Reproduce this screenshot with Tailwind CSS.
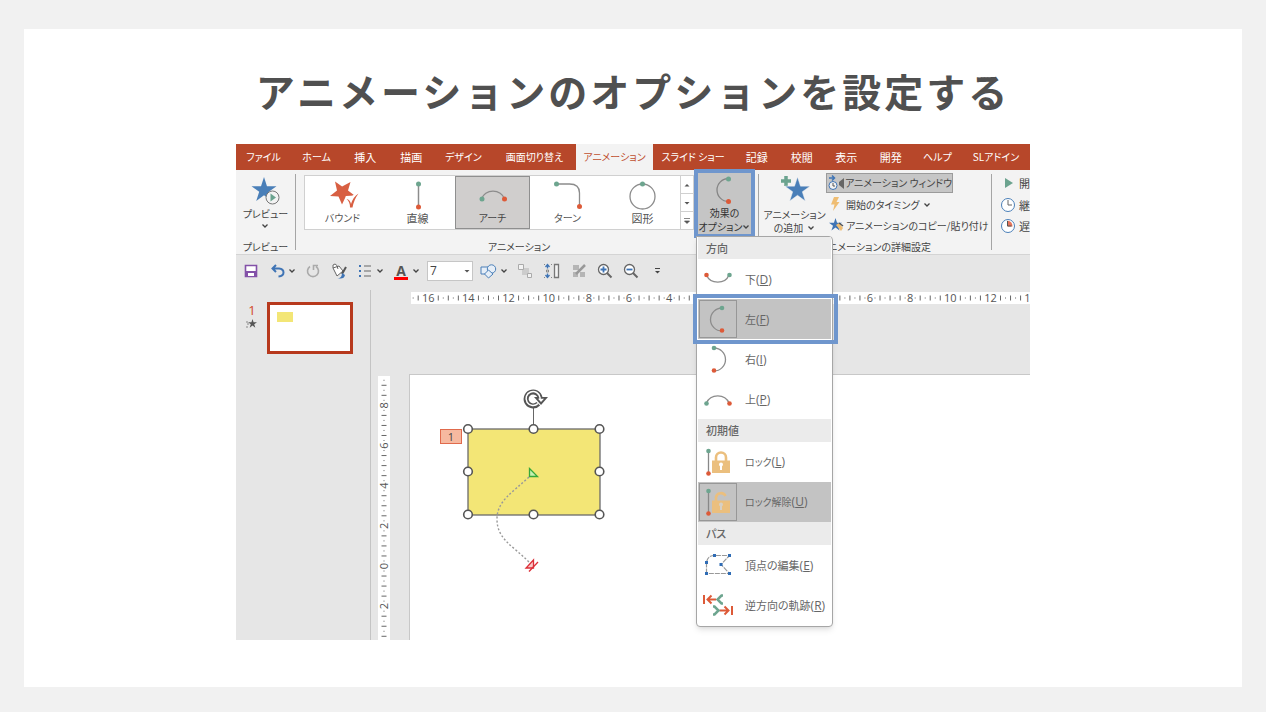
<!DOCTYPE html>
<html lang="ja">
<head>
<meta charset="utf-8">
<meta name="viewport" content="width=device-width, initial-scale=1">
<title>アニメーションのオプションを設定する</title>
<script src="https://cdn.jsdelivr.net/npm/@tailwindcss/browser@4"></script>
</head>
<body class="bg-[#f1f1f1] font-['Noto_Sans_CJK_JP',sans-serif] text-[#444]">
<svg class="hidden" aria-hidden="true">
  <symbol id="chev" viewBox="0 0 8 8"><path d="M1.500 2.500 4 5l2.500-2.500" fill="none" stroke="#444" stroke-width="1.300"/></symbol>
  <symbol id="star" viewBox="0 0 26 26"><path d="M13 0l3.100 9.500H26l-8 5.900 3.100 9.600-8.100-6-8.100 6L8 15.400 0 9.500h9.900z"/></symbol>
</svg>
<main class="min-h-screen px-6 pt-[29px] pb-[25px]">
<article class="min-h-[658px] bg-white pt-[31px] pb-[47px]">
<h1 class="text-center text-[39px] leading-[60px] font-bold tracking-[3px] text-[#505050]">アニメーションのオプションを設定する</h1>

<div class="relative mx-auto mt-[24px] max-w-[794px] bg-[#e6e6e6] text-[11px] leading-4 whitespace-nowrap [font-feature-settings:'palt']">
  <!-- ribbon tabs -->
  <nav class="grid h-[26px] grid-cols-[55fr_51fr_46fr_46fr_58fr_84fr_76fr_81fr_46fr_44fr_45fr_44fr_49fr_68fr] bg-[#b7472a] text-white">
    <button class="text-[10px]">ファイル</button><button class="text-[10px]">ホーム</button><button>挿入</button><button>描画</button><button class="text-[10px]">デザイン</button><button class="text-[10px]">画面切り替え</button><button class="bg-[#f3f3f3] text-[10px] text-[#c0502f]">アニメーション</button><button class="text-[10px]">スライド ショー</button><button>記録</button><button>校閲</button><button>表示</button><button>開発</button><button class="text-[10px]">ヘルプ</button><button class="text-[10px]">SLアドイン</button>
  </nav>

  <!-- ribbon -->
  <div class="flex h-[85px] overflow-hidden border-b border-[#d4d4d4] bg-[#f3f3f3] pt-[3px] text-[10px]">
    <section class="flex w-[59px] shrink-0 flex-col items-center">
      <button class="flex h-[67px] flex-col items-center">
        <svg class="mt-[3px] h-[30px] w-[30px]" viewBox="251 176 30 30"><use href="#star" x="252" y="177" width="26" height="25" fill="#4a7fb8"/><circle cx="273.500" cy="197.500" r="6.500" fill="#f3f3f3" stroke="#777"/><path d="M271.500 193.500l5.500 4-5.500 4z" fill="#6ba38f"/></svg>
        <span>プレビュー</span><svg class="h-2 w-2"><use href="#chev"/></svg>
      </button>
      <h2 class="leading-[14px]">プレビュー</h2>
    </section>
    <div class="mt-px h-[76px] w-px shrink-0 bg-[#a5a5a5]"></div>
    <section class="flex w-[462px] shrink-0 flex-col pt-[2px] pl-2">
      <div class="flex h-[55px] w-[390px] shrink-0 border border-[#d0d0d0] bg-white text-[#555]">
        <button class="flex w-[75px] flex-col items-center pt-[2px]"><svg class="h-8 w-[74px]" viewBox="305 178 74 32"><path d="M334 181.500l7.100 5 8.400-4.500-2.500 8.500 6.500 5-8.500.500-4 8.500-3.500-8-8.500-.500 7-5.500z" fill="#d85f42"/><path d="M344.500 196.500l4.500 1 7-5 2 2-8 14-3-5z" fill="#fff"/><path d="M345.500 199q3.500.5 4.500 5 2-7 7.500-10.500-4.500 6-6 14h-2.500q0-6-3.500-8.500z" fill="#d85f42"/></svg>バウンド</button>
        <button class="flex w-[75px] flex-col items-center pt-[2px] text-[11px]"><svg class="h-8 w-[74px]" viewBox="380 178 74 32"><path d="M417.500 184v23" stroke="#8c8c8c" stroke-width="1.500"/><circle cx="417.500" cy="184" r="2.500" fill="#6da58f"/><circle cx="417.500" cy="207" r="2.500" fill="#dd5a38"/></svg>直線</button>
        <button class="flex w-[75px] flex-col items-center border border-[#8f8f8f] bg-[#d0cecd] pt-px text-[#444]"><svg class="h-8 w-[72px]" viewBox="456 178 72 32"><path d="M480.500 199a12 11 0 0 1 23 0" fill="none" stroke="#8c8c8c" stroke-width="1.300"/><circle cx="481" cy="199" r="2.500" fill="#6da58f"/><circle cx="503.500" cy="199" r="2.500" fill="#dd5a38"/></svg>アーチ</button>
        <button class="flex w-[75px] flex-col items-center pt-[2px]"><svg class="h-8 w-[74px]" viewBox="530 178 74 32"><path d="M555.500 184h13q10 0 10 9v13" fill="none" stroke="#8c8c8c" stroke-width="1.300"/><circle cx="555.500" cy="184" r="2.500" fill="#6da58f"/><circle cx="578.500" cy="206.500" r="2.500" fill="#dd5a38"/></svg>ターン</button>
        <button class="flex w-[75px] flex-col items-center pt-[2px] text-[11px]"><svg class="h-8 w-[74px]" viewBox="605 178 74 32"><circle cx="641.500" cy="196.500" r="12.500" fill="none" stroke="#8c8c8c" stroke-width="1.300"/><circle cx="641.500" cy="184" r="2.500" fill="#6da58f"/></svg>図形</button>
        <div class="flex w-[13px] flex-col divide-y divide-[#d0d0d0] border-l border-[#d0d0d0]">
          <button class="flex flex-1 items-center justify-center" aria-label="前の行"><svg class="size-2" viewBox="0 0 8 8"><path d="M1.500 5.500h5L4 3z" fill="#555"/></svg></button>
          <button class="flex flex-1 items-center justify-center" aria-label="次の行"><svg class="size-2" viewBox="0 0 8 8"><path d="M1.500 3h5L4 5.500z" fill="#555"/></svg></button>
          <button class="flex flex-1 items-center justify-center" aria-label="その他"><svg class="size-2" viewBox="0 0 8 8"><path d="M1 1.500h6M1.500 4h5L4 6.500z" fill="#555" stroke="#555" stroke-width=".7"/></svg></button>
        </div>
      </div>
      <h2 class="mt-[10px] w-[430px] text-center leading-[14px]">アニメーション</h2>
    </section>
    <div class="mt-px h-[76px] w-px shrink-0 bg-[#a5a5a5]"></div>
    <section class="w-[232px] shrink-0">
      <div class="ml-1 flex h-[67px]">
        <button class="flex w-[63px] flex-col items-center leading-[13px]"><svg class="mt-px mb-[3px] h-[31px] w-[32px]" viewBox="779 175 32 31"><path d="M786 177v10M781 182h10" stroke="#6ba38f" stroke-width="3.500"/><use href="#star" x="785" y="178" width="25" height="25" fill="#4a7fb8" stroke="#f3f3f3" stroke-width=".5"/></svg><span>アニメーション</span><span class="flex items-center gap-1">の追加<svg class="h-2 w-2"><use href="#chev"/></svg></span></button>
        <div class="flex flex-col items-start">
          <button class="flex h-[20px] items-center border border-[#9b9b9b] bg-[#c6c6c6]"><svg class="h-[18px] w-[18px] shrink-0" viewBox="826 174 18 18"><path d="M828 178h5m-2-2.500 2.500 2.500-2.500 2.500" stroke="#3f74b5" stroke-width="1.500" fill="none"/><circle cx="832" cy="185.500" r="4" fill="#f3f3f3" stroke="#3f74b5"/><path d="M832 183v3h2" stroke="#555" fill="none"/><path d="M843 178v11l-5-4v-3z" fill="#666"/></svg>アニメーション ウィンドウ</button>
          <button class="mt-[2px] flex h-[20px] items-center"><svg class="h-[18px] w-[20px]" viewBox="826 196 20 18"><path d="M834 197h5l-2.500 5h3l-6.500 9 1.500-6.500H831z" fill="#efbd72"/></svg>開始のタイミング<svg class="ml-1 h-2 w-2"><use href="#chev"/></svg></button>
          <button class="mt-px flex h-[20px] items-center"><svg class="h-[18px] w-[20px]" viewBox="826 217 20 18"><use href="#star" x="829" y="218" width="13" height="13" fill="#3f74b5"/><path d="M836 225l5 6 2-3-4-5z" fill="#efbd72"/><path d="M839 223l4 3" stroke="#555" stroke-width="1.500"/></svg>アニメーションのコピー/貼り付け</button>
        </div>
      </div>
      <h2 class="text-center leading-[14px]">アニメーションの詳細設定</h2>
    </section>
    <div class="mt-px h-[76px] w-px shrink-0 bg-[#a5a5a5]"></div>
    <section class="flex min-w-0 flex-1 flex-col overflow-hidden pl-2 text-[11px]">
      <button class="flex h-[20px] items-center gap-[3px]"><svg class="h-[18px] w-[16px] shrink-0" viewBox="1000 174 16 18"><path d="M1005 178l8 5-8 5z" fill="#6ba38f"/></svg>開</button>
      <button class="mt-[2px] flex h-[20px] items-center gap-[3px]"><svg class="h-[18px] w-[16px] shrink-0" viewBox="1000 195 16 18"><circle cx="1008" cy="204" r="6.500" fill="#fff" stroke="#4a7fb8"/><path d="M1008 199v5h4" fill="none" stroke="#666"/></svg>継</button>
      <button class="mt-px flex h-[20px] items-center gap-[3px]"><svg class="h-[18px] w-[16px] shrink-0" viewBox="1000 216 16 18"><circle cx="1008" cy="225" r="6.500" fill="#fff" stroke="#4a7fb8"/><path d="M1007.500 219.500a6 6 0 0 1 5 6h-5z" fill="#e7745a"/><path d="M1007.500 220v5h4" fill="none" stroke="#555"/></svg>遅</button>
    </section>
  </div>

  <!-- quick access bar -->
  <div class="flex h-[35px] items-start gap-1.5 pt-[6px] pl-[5px]">
    <button aria-label="保存" class="h-5 w-5"><svg viewBox="0 0 20 20"><path d="M4.500 4.500h11v11h-11z" fill="#fff" stroke="#8351a8" stroke-width="1.600"/><path d="M4 10h12v6H4z" fill="#8351a8"/><path d="M7 12h6v3H7z" fill="#fff"/></svg></button>
    <button aria-label="元に戻す" class="flex h-5 w-[30px] items-center"><svg class="size-5" viewBox="0 0 20 20"><path d="M9 4 5.500 7.500 9 11M5.500 7.500H12q4.500.5 4.500 4t-5 4" fill="none" stroke="#3f74b5" stroke-width="2"/></svg><svg class="ml-px size-2"><use href="#chev"/></svg></button>
    <button aria-label="やり直し" class="h-5 w-5"><svg viewBox="0 0 20 20"><path d="M7 5.500a5.500 5.500 0 1 0 6 0M10.500 9V4.500H15" fill="none" stroke="#aaa" stroke-width="1.600"/></svg></button>
    <button aria-label="塗りつぶし" class="h-5 w-5"><svg viewBox="0 0 20 20"><path d="M4 7l6-2 4 5-6 5zM4 7q-1-4 2-4 2 0 3 5" fill="#fff" stroke="#666"/><path d="M17 6l-4 7" stroke="#555" stroke-width="2"/><path d="M8 17q5 1 5-5l3 2q-1 5-8 3z" fill="#3f74b5"/></svg></button>
    <button aria-label="箇条書き" class="flex h-5 w-[30px] items-center"><svg class="size-5" viewBox="0 0 20 20"><path d="M4 5h2M4 10h2M4 15h2" stroke="#3f74b5" stroke-width="2.200"/><path d="M9 5h7M9 10h7M9 15h7" stroke="#666" stroke-width="1.200"/></svg><svg class="ml-px size-2"><use href="#chev"/></svg></button>
    <button aria-label="フォントの色" class="flex h-5 w-[30px] items-center pl-[3px]"><span class="flex h-[18px] w-[14px] items-center justify-center border-b-3 border-[#f00] pt-[2px] font-['Open_Sans',sans-serif] text-[14px] leading-3 font-bold text-[#555]">A</span><svg class="ml-[4px] size-2"><use href="#chev"/></svg></button>
    <div class="relative h-5 w-[46px]">
      <select aria-label="フォント サイズ" class="h-5 w-full appearance-none border border-[#c6c6c6] bg-white pl-[2px] font-['Open_Sans',sans-serif] text-[12px] leading-4"><option>7</option><option>8</option><option>9</option></select>
      <svg class="pointer-events-none absolute top-[6px] right-[2px] size-2" viewBox="0 0 8 8"><path d="M1.500 3h5L4 5.500z" fill="#555"/></svg>
    </div>
    <button aria-label="図形" class="flex h-5 w-[30px] items-center"><svg class="size-5" viewBox="0 0 20 20" fill="#e6eef7" stroke="#4a7fb8"><path d="M2 6h8v7H2z"/><circle cx="12.500" cy="8" r="4.200"/><path d="M9.500 9l4.500 4-4.500 4-4-4z"/></svg><svg class="ml-px size-2"><use href="#chev"/></svg></button>
    <button aria-label="グループ化" class="h-5 w-5"><svg viewBox="0 0 20 20"><path d="M7 7h7v7H7z" fill="#ccc"/><path d="M3.500 3.500h5v5h-5zM12.500 12.500h4v4h-4z" fill="#f3f3f3" stroke="#aaa"/></svg></button>
    <button aria-label="高さを揃える" class="h-5 w-[22px]"><svg viewBox="0 0 22 20"><path d="M6.500 4v3.500M6.500 12.500V16M4.500 6l2-2.500 2 2.500M4.500 14l2 2.500 2-2.500" fill="none" stroke="#3f74b5" stroke-width="1.300"/><path d="M5.500 9h2v2h-2zM3 3.500h1M3 16.500h1M10 3.500h1M10 16.500h1" fill="none" stroke="#888"/><path d="M13.500 3.500h4v13h-4z" fill="#f3f3f3" stroke="#777" stroke-width="1.300"/></svg></button>
    <button aria-label="書式" class="h-5 w-5"><svg viewBox="0 0 20 20"><path d="M4 4h6v5H4zM4 11h5v5H4zM11 11h5v5h-5z" fill="#b5b5b5"/><path d="M16 4l-9 9" stroke="#999" stroke-width="2.500"/></svg></button>
    <button aria-label="拡大" class="h-5 w-5"><svg viewBox="0 0 20 20"><circle cx="8.500" cy="8.500" r="5" fill="#fff" stroke="#666" stroke-width="1.300"/><path d="M12 12l4.500 4.500" stroke="#666" stroke-width="2"/><path d="M5.500 8.500h6M8.500 5.500v6" stroke="#3f74b5" stroke-width="1.800"/></svg></button>
    <button aria-label="縮小" class="h-5 w-5"><svg viewBox="0 0 20 20"><circle cx="8.500" cy="8.500" r="5" fill="#fff" stroke="#666" stroke-width="1.300"/><path d="M12 12l4.500 4.500" stroke="#666" stroke-width="2"/><path d="M5.500 8.500h6" stroke="#3f74b5" stroke-width="1.800"/></svg></button>
    <button aria-label="カスタマイズ" class="h-5 w-5"><svg viewBox="0 0 20 20"><path d="M8 7.500h5" stroke="#444"/><path d="M8 10h5l-2.500 2.500z" fill="#444"/></svg></button>
  </div>

  <!-- workspace -->
  <div class="flex h-[350px]">
    <aside class="flex w-[135px] shrink-0 items-start border-r border-[#c4c4c4] pt-3 pl-3">
      <div class="flex w-[8px] flex-col items-center font-['Open_Sans',sans-serif] text-[13px] text-[#d2492a]">1<svg class="mt-px h-[10px] w-[12px] shrink-0" viewBox="0 0 12 10"><use href="#star" x="2" y="0" width="9" height="9" fill="#555"/><path d="M0 3h2M1 5h2M0 8h2" stroke="#888"/></svg></div>
      <button aria-label="スライド 1" class="ml-[11px] flex h-[52px] w-[86px] items-start border-3 border-[#b7391d] bg-white p-[7px]"><span class="h-[10px] w-[16px] bg-[#f3e676]"></span></button>
    </aside>
    <div class="min-w-0 flex-1 overflow-hidden pt-[2px]">
      <div class="pl-[40px]"><svg id="ruler-h" class="block h-[12px] w-full overflow-visible bg-white"></svg></div>
      <div class="mt-[70px] flex h-[266px]">
        <svg id="ruler-v" class="mt-[2px] ml-[7px] w-[12px] shrink-0 overflow-visible bg-white"></svg>
        <div class="relative ml-[19px] flex-1 border-t border-l border-[#c8c8c8] bg-white">
          <svg class="absolute top-0 left-0 h-[220px] w-[220px]" viewBox="410 375 220 220" fill="none">
            <path d="M533.500 407v22" stroke="#666"/>
            <rect x="468" y="429" width="132" height="86" fill="#f3e676" stroke="#6b6b6b" stroke-width="1.300"/>
            <path d="M529 477c-17 16-32 24-32 42 0 20 15 26 32 43" stroke="#999" stroke-width="1.400" stroke-dasharray="2 2"/>
            <path d="M529.500 468.500l8 8h-8z" fill="#c6f0b0" stroke="#36a83a" stroke-width="1.300"/>
            <path d="M533.500 560v8h-7.500z" fill="#f9c9c9" stroke="#dc2f38" stroke-width="1.300"/><path d="M538 562l-9 9.500" stroke="#dc2f38" stroke-width="1.300"/>
            <g fill="#fff" stroke="#555" stroke-width="1.600"><circle cx="468" cy="429" r="4.300"/><circle cx="533.500" cy="429" r="4.300"/><circle cx="599.500" cy="429" r="4.300"/><circle cx="468" cy="471.500" r="4.300"/><circle cx="599.500" cy="471.500" r="4.300"/><circle cx="468" cy="514.500" r="4.300"/><circle cx="533.500" cy="514.500" r="4.300"/><circle cx="599.500" cy="514.500" r="4.300"/></g>
            <path d="M538.300 403.700a7 7 0 1 1 1.700-6.200" stroke="#555" stroke-width="5"/><path d="M534 397h14l-7 8z" fill="#555"/><path d="M538 403.500a7 7 0 1 1 2-6v2" stroke="#fff" stroke-width="1.500"/><path d="M538 398.700h6l-3 3.300z" fill="#fff"/>
            <rect x="440.500" y="429.500" width="21" height="14" fill="#f6b9a0" stroke="#e06a4c"/>
            <text x="451" y="440.500" text-anchor="middle" font-size="11" fill="#444" class="font-['Open_Sans',sans-serif]">1</text>
          </svg>
        </div>
      </div>
    </div>
  </div>

  <!-- effect options button, open -->
  <button class="absolute top-[25px] left-[458px] flex h-[69px] w-[61px] flex-col items-center border-4 border-[#6f96cd] bg-[#c5c5c5] leading-[14px] text-[#333]">
    <svg class="h-[33px] w-[50px] shrink-0" viewBox="699 173 50 33"><path d="M727.500 178.500a11.500 11.500 0 0 0 0 23" fill="none" stroke="#858585" stroke-width="1.300"/><circle cx="727.500" cy="179" r="2.500" fill="#6da58f"/><circle cx="727.500" cy="201.500" r="2.500" fill="#dd5a38"/></svg>
    <span class="text-[10px]">効果の</span><span class="flex items-center text-[10px]">オプション<svg class="h-2 w-2"><use href="#chev"/></svg></span>
  </button>

  <!-- effect options menu -->
  <div role="menu" class="absolute top-[92px] left-[460px] w-[137px] rounded-b-[4px] rounded-tr-[4px] border border-[#a6a6a6] bg-white px-px pb-px text-[#666] shadow-md">
    <h3 class="h-[22px] bg-[#ebebeb] pl-2 leading-[22px] font-medium">方向</h3>
    <button role="menuitem" class="flex h-10 w-full items-center gap-2 pl-px"><svg class="size-[38px]" viewBox="0 0 38 38"><path d="M7.500 15a12 11 0 0 0 22.500 0" fill="none" stroke="#8c8c8c" stroke-width="1.300"/><circle cx="7.500" cy="15" r="2.300" fill="#dd5a38"/><circle cx="30.500" cy="15" r="2.300" fill="#6da58f"/></svg><span>下<span class="font-['Open_Sans',sans-serif] text-[12px]">(<u>D</u>)</span></span></button>
    <button role="menuitem" class="flex h-10 w-full items-center gap-2 bg-[#c3c3c3] pl-px"><svg class="size-[38px] border border-[#979797]" viewBox="1 1 36 36"><path d="M23 8a11.500 11.500 0 0 0 0 23" fill="none" stroke="#8c8c8c" stroke-width="1.300"/><circle cx="23" cy="8" r="2.300" fill="#6da58f"/><circle cx="23" cy="30.500" r="2.300" fill="#dd5a38"/></svg><span>左<span class="font-['Open_Sans',sans-serif] text-[12px]">(<u>F</u>)</span></span></button>
    <button role="menuitem" class="flex h-10 w-full items-center gap-2 pl-px"><svg class="size-[38px]" viewBox="0 0 38 38"><path d="M15 8a11.500 11.500 0 0 1 0 23" fill="none" stroke="#8c8c8c" stroke-width="1.300"/><circle cx="15" cy="8" r="2.300" fill="#6da58f"/><circle cx="15" cy="30.500" r="2.300" fill="#dd5a38"/></svg><span>右<span class="font-['Open_Sans',sans-serif] text-[12px]">(<u>I</u>)</span></span></button>
    <button role="menuitem" class="flex h-10 w-full items-center gap-2 pl-px"><svg class="size-[38px]" viewBox="0 0 38 38"><path d="M7.500 23a12 11 0 0 1 22.500 0" fill="none" stroke="#8c8c8c" stroke-width="1.300"/><circle cx="7.500" cy="23.500" r="2.300" fill="#6da58f"/><circle cx="30.500" cy="23.500" r="2.300" fill="#dd5a38"/></svg><span>上<span class="font-['Open_Sans',sans-serif] text-[12px]">(<u>P</u>)</span></span></button>
    <h3 class="h-[23px] bg-[#ebebeb] pl-2 leading-[23px] font-medium">初期値</h3>
    <button role="menuitem" class="flex h-10 w-full items-center gap-2 pl-px"><svg class="size-[38px]" viewBox="0 0 38 38"><path d="M9.500 8v23" stroke="#888" stroke-width="1.300"/><circle cx="9.500" cy="8" r="2.300" fill="#6da58f"/><circle cx="9.500" cy="30.500" r="2.300" fill="#dd5a38"/><path d="M13 17.500h18V30H13z" fill="#ebbf7e"/><path d="M17 18v-3.500a5 5 0 0 1 10 0V18" fill="none" stroke="#ebbf7e" stroke-width="2.600"/><circle cx="22" cy="21.500" r="2" fill="#fff"/><path d="M22 22v5" stroke="#fff" stroke-width="2"/></svg><span class="text-[10px]">ロック<span class="font-['Open_Sans',sans-serif] text-[12px]">(<u>L</u>)</span></span></button>
    <button role="menuitem" class="flex h-10 w-full items-center gap-2 bg-[#c3c3c3] pl-px"><svg class="size-[38px] border border-[#979797]" viewBox="1 1 36 36"><path d="M9.500 8v23" stroke="#888" stroke-width="1.300"/><circle cx="9.500" cy="8" r="2.300" fill="#6da58f"/><circle cx="9.500" cy="30.500" r="2.300" fill="#dd5a38"/><path d="M13 17.500h18V30H13z" fill="#ebbf7e"/><path d="M17 18v-3.500a5 5 0 0 1 9.500-1.500" fill="none" stroke="#ebbf7e" stroke-width="2.600"/><circle cx="22" cy="21.500" r="2" fill="#d6d0c6"/><path d="M22 22v5" stroke="#d6d0c6" stroke-width="2"/></svg><span class="text-[10px]">ロック解除<span class="font-['Open_Sans',sans-serif] text-[12px]">(<u>U</u>)</span></span></button>
    <h3 class="h-[23px] bg-[#ebebeb] pl-2 leading-[23px] font-medium">パス</h3>
    <button role="menuitem" class="flex h-10 w-full items-center gap-2 pl-px"><svg class="size-[38px]" viewBox="0 0 38 38"><path d="M7.500 27.500v-11q1-7 8-7h15l-8.500 9 8.500 9z" fill="none" stroke="#999" stroke-width="1.200" stroke-dasharray="5 1"/><path d="M6 26h3v3H6zM6 15h3v3H6zM14 8h3v3h-3zM29 8h3v3h-3zM20.500 17h3v3h-3zM29 26h3v3h-3z" fill="#2f6cb5"/></svg><span>頂点の編集<span class="font-['Open_Sans',sans-serif] text-[12px]">(<u>E</u>)</span></span></button>
    <button role="menuitem" class="flex h-10 w-full items-center gap-2 pl-px"><svg class="size-[38px]" viewBox="0 0 38 38" fill="none" stroke-width="2"><path d="M5 9v9M17 13.500H8.500m4-4-4 4 4 4M33 20v9M20.500 24.500h9m-4-4 4 4-4 4" stroke="#dd5a38"/><path d="M24 9.500h-1.500l-4 4 4 4H24M14 20.500h1.500l4 4-4 4H14" stroke="#6da58f" stroke-width="2.500"/></svg><span>逆方向の軌跡<span class="font-['Open_Sans',sans-serif] text-[12px]">(<u>R</u>)</span></span></button>
  </div>
  <!-- highlight frame round the chosen direction -->
  <div class="pointer-events-none absolute top-[150px] left-[457px] h-[50px] w-[145px] border-4 border-[#6f96cd]"></div>
</div>
</article>
</main>
<script>
// Draws a centimetre ruler: a label every 2 cm, bars and dots in between.
function ruler(svg, vertical, zero, length, mid) {
  const step = 5.02, ns = 'http://www.w3.org/2000/svg';
  const add = (name, attrs, text) => {
    const e = document.createElementNS(ns, name);
    for (const k in attrs) e.setAttribute(k, attrs[k]);
    if (text !== undefined) e.textContent = text;
    svg.appendChild(e);
  };
  for (let i = -80; i <= 80; i++) {
    const p = zero + i * step, m = ((i % 8) + 8) % 8;
    if (p < 0 || p > length + 4) continue;
    const n = Math.abs(Math.round(i / 8) * 2);
    if (m === 0) {
      const a = { 'text-anchor': 'middle', 'font-size': 11, fill: '#555', 'font-family': 'Open Sans, sans-serif' };
      if (vertical) a.transform = `translate(${mid + 4} ${p}) rotate(-90)`;
      else { a.x = p; a.y = mid + 4; }
      add('text', a, n);
    } else {
      if ((m === 1 || m === 7) && n >= 10) continue;
      const h = m % 2 ? 1 : 5, o = mid - h / 2;
      add('rect', vertical ? { x: o, y: p - .5, width: h, height: 1, fill: '#666' }
                           : { x: p - .5, y: o, width: 1, height: h, fill: '#666' });
    }
  }
}
ruler(document.getElementById('ruler-h'), false, 338.5, 618, 6);
ruler(document.getElementById('ruler-v'), true, 190, 264, 6);
</script>
</body>
</html>
